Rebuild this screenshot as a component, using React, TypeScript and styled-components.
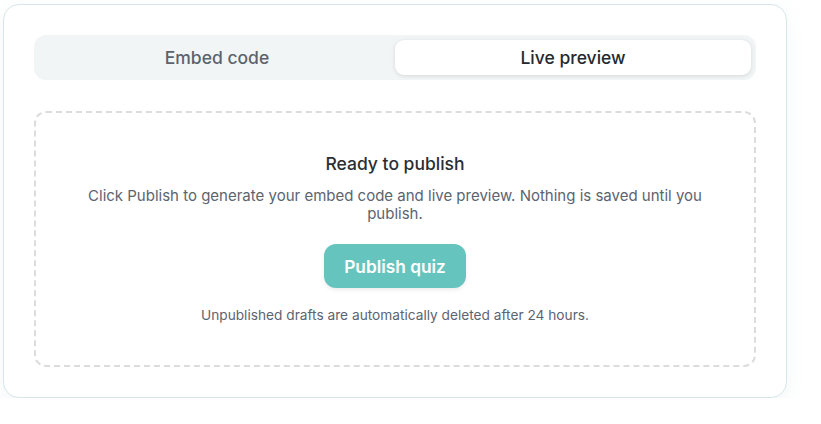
import React from "react";
import styled, { createGlobalStyle } from "styled-components";

const GlobalStyle = createGlobalStyle`
    body {
        margin: 0;
        background: #ffffff;
        font-family: Inter, "Noto Sans", sans-serif;
    }
`;

export default function App() {
    return (
        <>
            <GlobalStyle />
            <Page>
                <Card>
                    <Tabs>
                        <Tab>Embed code</Tab>
                        <Tab active>Live preview</Tab>
                    </Tabs>
                    <DropZone>
                        <Title>Ready to publish</Title>
                        <Description>
                            Click Publish to generate your embed code and live preview. Nothing is saved until you
                            publish.
                        </Description>
                        <PublishButton>Publish quiz</PublishButton>
                        <Note>Unpublished drafts are automatically deleted after 24 hours.</Note>
                    </DropZone>
                </Card>
            </Page>
        </>
    );
}

const Page = styled.div`
    padding: 4px 0 0 3px;
`;

const Card = styled.div`
    width: 784px;
    box-sizing: border-box;
    padding: 30px;
    border: 1px solid #d8e6ea;
    border-radius: 16px;
    background: #ffffff;
    box-shadow: 0 6px 18px rgba(170, 200, 210, 0.15);
    display: flex;
    flex-direction: column;
    gap: 31px;
`;

const Tabs = styled.div`
    display: grid;
    grid-template-columns: 1fr 1fr;
    padding: 5px;
    border-radius: 12px;
    background: #f1f5f6;
`;

const Tab = styled.button<{ active?: boolean }>`
    height: 35px;
    border: none;
    border-radius: 9px;
    font-family: inherit;
    font-size: 17.5px;
    font-weight: 450;
    color: ${(p) => (p.active ? "#24292f" : "#5b636d")};
    background: ${(p) => (p.active ? "#ffffff" : "transparent")};
    box-shadow: ${(p) => (p.active ? "0 1px 4px rgba(0, 0, 0, 0.12)" : "none")};
    cursor: pointer;
`;

const DropZone = styled.div`
    display: flex;
    flex-direction: column;
    align-items: center;
    padding: 39px 20px 41px;
    border: 2px dashed #dcdcdc;
    border-radius: 12px;
    text-align: center;
`;

const Title = styled.h3`
    margin: 0;
    font-size: 17.5px;
    line-height: 24px;
    font-weight: 450;
    color: #2a2e33;
`;

const Description = styled.p`
    margin: 11px 0 0;
    max-width: 640px;
    font-size: 15px;
    line-height: 18px;
    color: #5c6470;
`;

const PublishButton = styled.button`
    margin-top: 21px;
    height: 44px;
    padding: 0 20px;
    border: none;
    border-radius: 12px;
    background: #66c4be;
    color: #ffffff;
    font-family: inherit;
    font-size: 17.3px;
    font-weight: 600;
    box-shadow: 0 2px 4px rgba(0, 0, 0, 0.08);
    cursor: pointer;
`;

const Note = styled.p`
    margin: 18px 0 0;
    font-size: 13.7px;
    line-height: 18px;
    color: #5c6470;
`;
